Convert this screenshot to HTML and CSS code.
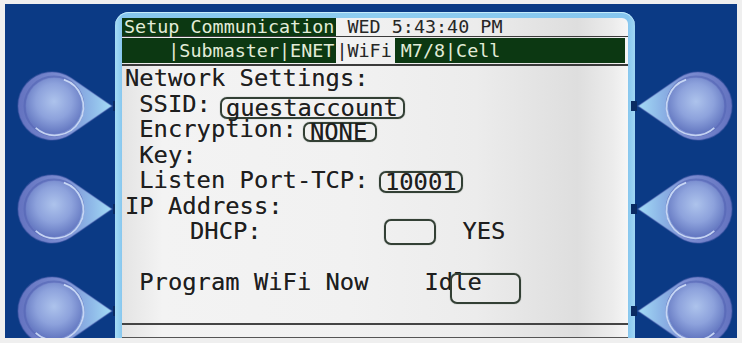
FILE: index.html
```html
<!DOCTYPE html>
<html lang="en">
<head>
<meta charset="utf-8">
<title>Setup Communication</title>
<link rel="stylesheet" href="styles.css">
</head>
<body>
<div class="outer">
  <div class="panel">
    <div class="side side-left">
      <svg class="btn" width="110" height="70" viewBox="0 0 110 70">
        <defs>
          <linearGradient id="tearG" x1="0" y1="0" x2="1" y2="0">
            <stop offset="0" stop-color="#6473c0"/>
            <stop offset="0.5" stop-color="#7d8ed2"/>
            <stop offset="0.75" stop-color="#8cb4e6"/>
            <stop offset="1" stop-color="#a4dcf6"/>
          </linearGradient>
          <radialGradient id="sphG" cx="0.5" cy="0.42" r="0.58">
            <stop offset="0" stop-color="#adc3ec"/>
            <stop offset="0.55" stop-color="#8da2dc"/>
            <stop offset="1" stop-color="#6276c0"/>
          </radialGradient>
          <g id="btnShape">
            <path d="M107 35 L66.3 7 A34 34 0 1 0 66.3 63 Z" fill="url(#tearG)"/>
            <path d="M107 35 L66.3 7 A34 34 0 1 0 66.3 63 Z" fill="none" stroke="#4d60b0" stroke-opacity="0.45" stroke-width="1.5"/>
            <circle cx="49" cy="35" r="29.5" fill="none" stroke="#5466b4" stroke-opacity="0.6" stroke-width="2"/>
            <circle cx="49" cy="35" r="28" fill="url(#sphG)"/>
            <path d="M58.9 8.7 A28.5 28.5 0 1 1 30.7 56.8" fill="none" stroke="#d6e4fc" stroke-opacity="0.85" stroke-width="1.8"/>
            <rect x="108" y="30" width="6" height="10" fill="#0a2a62"/>
          </g>
        </defs>
        <use href="#btnShape"/>
      </svg>
      <svg class="btn" width="110" height="70" viewBox="0 0 110 70"><use href="#btnShape"/></svg>
      <svg class="btn" width="110" height="70" viewBox="0 0 110 70"><use href="#btnShape"/></svg>
    </div>

    <div class="frame">
      <div class="screen">
        <div class="title-row"><span class="inv">Setup Communication</span><span class="plain"> WED 5:43:40 PM</span></div>
        <div class="tab-row"><span class="inv">    |Submaster|ENET</span><span class="plain">|WiFi</span><span class="inv inv-fill">M7/8|Cell</span></div>
        <div class="rule rule-top"></div>
        <div class="content">
          <div class="row">Network Settings:</div>
          <div class="row ind1">SSID:<span class="field f-ssid">guestaccount</span></div>
          <div class="row ind1">Encryption:<span class="field f-enc">NONE</span></div>
          <div class="row ind1">Key:</div>
          <div class="row ind1">Listen Port-TCP:<span class="field f-port">10001</span></div>
          <div class="row">IP Address:</div>
          <div class="row ind-dhcp">DHCP:<span class="field f-dhcp"></span><span class="yes">YES</span></div>
          <div class="row"></div>
          <div class="row ind1">Program WiFi Now<span class="idle">Idle</span></div>
        </div>
        <div class="rule rule-bottom"></div>
      </div>
    </div>

    <div class="side side-right">
      <svg class="btn" width="102" height="70" viewBox="0 0 102 70"><use href="#btnShape" transform="translate(110 0) scale(-1 1)"/></svg>
      <svg class="btn" width="102" height="70" viewBox="0 0 102 70"><use href="#btnShape" transform="translate(110 0) scale(-1 1)"/></svg>
      <svg class="btn" width="102" height="70" viewBox="0 0 102 70"><use href="#btnShape" transform="translate(110 0) scale(-1 1)"/></svg>
    </div>
  </div>
</div>
</body>
</html>
```

FILE: styles.css
```css
* {
  box-sizing: border-box;
  margin: 0;
  padding: 0;
}

html, body {
  width: 742px;
  height: 343px;
  overflow: hidden;
  background: #eeeeee;
}

.outer {
  height: 343px;
  padding: 4px 5px 5px 5px;
  background: #efefef;
}

.panel {
  display: flex;
  height: 334px;
  background: #0b3a85;
  overflow: hidden;
}

.side {
  flex: none;
  display: flex;
  flex-direction: column;
  gap: 32.5px;
  padding-top: 67px;
}

.side-left { width: 110px; }
.side-right { width: 102px; }

.btn {
  display: block;
  flex: none;
  overflow: visible;
}

.frame {
  flex: none;
  width: 520px;
  margin-top: 8px;
  padding: 6px 7px 0 7px;
  border-radius: 14px 14px 0 0;
  background: linear-gradient(90deg, #a6dcf6 0%, #86c6ee 1.4%, #8ecdf0 50%, #86c6ee 98.6%, #a0d6f4 100%);
  box-shadow: inset 0 1px 0 #c4ecfc;
}

.screen {
  height: 100%;
  border-radius: 6px 6px 0 0;
  background: linear-gradient(90deg, #e4e4e4 0%, #f3f3f3 8%, #f1f1f1 45%, #ececec 70%, #dedede 90%, #ececec 97%, #f6f6f6 100%);
  border-bottom: 1px solid #555;
  font-family: "DejaVu Sans Mono", monospace;
  color: #1e1e1e;
}

.title-row, .tab-row {
  display: flex;
  font-size: 18.4px;
  white-space: pre;
}

.title-row {
  height: 19px;
  line-height: 18px;
  border-bottom: 1px solid #3a3a3a;
}

.tab-row {
  margin-top: 1px;
  height: 25px;
  line-height: 25px;
}

.inv {
  display: block;
  background: #0c3812;
  color: #e2ecd8;
  padding: 0 2px;
}

.plain {
  display: block;
  color: #262626;
}

.inv-fill {
  flex: 1;
  margin: 0 3px 0 3px;
  padding-left: 6px;
}

.rule {
  height: 2px;
  background: #3a3a3a;
}

.rule-top { margin-top: 1px; }

.rule-bottom {
  margin-top: 27px;
  height: 2px;
  background: #444;
}

.content {
  padding-left: 3px;
  font-size: 23.8px;
  text-shadow: 0 0 0.6px rgba(0, 0, 0, 0.45);
}

.row {
  height: 25.5px;
  line-height: 25.5px;
  white-space: pre;
}

.ind1 { padding-left: 14.3px; }
.ind-dhcp { padding-left: 65px; }

.field {
  display: inline-block;
  border: 2px solid #334035;
  border-radius: 7px;
  white-space: pre;
  box-shadow: 0 0 1px rgba(30, 40, 30, 0.6);
}

.f-ssid {
  margin-left: 9px;
  padding: 0 5px 0 4px;
  line-height: 18px;
  vertical-align: -4.2px;
}

.f-enc {
  margin-left: 6px;
  padding: 0 8px 0 5px;
  line-height: 16px;
  vertical-align: -3.2px;
}

.f-port {
  margin-left: 10.4px;
  padding: 0 4px;
  line-height: 18px;
  vertical-align: -2.2px;
}

.f-dhcp {
  margin-left: 122.3px;
  width: 52px;
  height: 26px;
  vertical-align: -6px;
}

.yes {
  margin-left: 26.5px;
}

.idle {
  display: inline-block;
  position: relative;
  margin-left: 56px;
}

.idle::after {
  content: "";
  position: absolute;
  left: 25.3px;
  top: 3px;
  width: 67px;
  height: 27px;
  border: 2px solid #334035;
  border-radius: 7px;
  box-shadow: 0 0 1px rgba(30, 40, 30, 0.6);
}
```
